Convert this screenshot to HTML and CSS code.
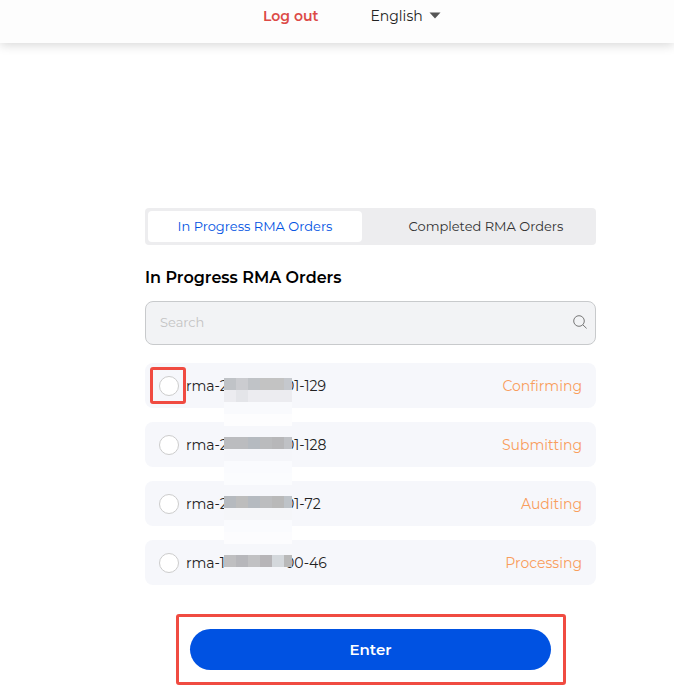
FILE: index.html
```html
<!DOCTYPE html>
<html lang="en">
<head>
    <meta charset="UTF-8">
    <meta name="viewport" content="width=device-width, initial-scale=1.0">
    <title>RMA Orders</title>
    <link rel="stylesheet" href="styles.css">
</head>
<body>
    <header class="header">
        <a href="#" class="logout">Log out</a>
        <div class="language">
            <select aria-label="Language">
                <option>English</option>
            </select>
            <svg class="caret" viewBox="0 0 12 7" aria-hidden="true"><path d="M0.5 0.5h11L6 6.5z" fill="#555"/></svg>
        </div>
    </header>

    <main class="content">
        <div class="tabs">
            <button type="button" class="tab active">In Progress RMA Orders</button>
            <button type="button" class="tab">Completed RMA Orders</button>
        </div>

        <h1>In Progress RMA Orders</h1>

        <div class="search">
            <input type="text" placeholder="Search" aria-label="Search">
            <svg class="search-icon" viewBox="0 0 14 14" fill="none" stroke="#777" aria-hidden="true">
                <circle cx="6" cy="6" r="5.3"/>
                <path d="M9.8 9.8l3.8 3.6"/>
            </svg>
        </div>

        <div class="orders">
            <label class="order">
                <span class="pick highlight"><input type="radio" name="order"></span>
                <span class="prefix">rma-2</span>
                <span class="mask">
                    <svg width="68" height="48" shape-rendering="crispEdges" aria-hidden="true">
                        <path fill="#c0c3c7" d="M0 0h12v12H0z"/><path fill="#cbccd0" d="M12 0h12v12H12z"/><path fill="#c0c3c7" d="M24 0h12v12H24z"/><path fill="#c3c3c3" d="M36 0h24v12H36z"/><path fill="#c5c8cd" d="M60 0h8v12h-8z"/>
                        <path fill="#ececf0" d="M0 12h68v12H0z"/><path fill="#e4e5e9" d="M12 12h12v12H12z"/>
                        <path fill="#f9fafd" d="M0 24h68v12H0z"/><path fill="#fdfdfe" d="M0 36h68v12H0z"/>
                    </svg>
                </span>
                <span class="suffix">01-129</span>
                <span class="status">Confirming</span>
            </label>
            <label class="order">
                <span class="pick"><input type="radio" name="order"></span>
                <span class="prefix">rma-2</span>
                <span class="mask">
                    <svg width="68" height="48" shape-rendering="crispEdges" aria-hidden="true">
                        <path fill="#bbbcbf" d="M0 0h24v12H0z"/><path fill="#b5bac0" d="M24 0h12v12H24z"/><path fill="#babbbd" d="M36 0h12v12H36z"/><path fill="#b7b7b9" d="M48 0h12v12H48z"/><path fill="#bfc1c5" d="M60 0h8v12h-8z"/>
                        <path fill="#f5f6fa" d="M0 12h68v12H0z"/>
                        <path fill="#fafbfe" d="M0 24h68v12H0z"/><path fill="#fbfcfe" d="M0 36h68v12H0z"/>
                    </svg>
                </span>
                <span class="suffix">01-128</span>
                <span class="status">Submitting</span>
            </label>
            <label class="order">
                <span class="pick"><input type="radio" name="order"></span>
                <span class="prefix">rma-2</span>
                <span class="mask">
                    <svg width="68" height="48" shape-rendering="crispEdges" aria-hidden="true">
                        <path fill="#b6babf" d="M0 0h12v12H0z"/><path fill="#bdbdbd" d="M12 0h12v12H12z"/><path fill="#b5bac0" d="M24 0h12v12H24z"/><path fill="#bcbdbf" d="M36 0h12v12H36z"/><path fill="#b9b9b9" d="M48 0h12v12H48z"/><path fill="#bec3c8" d="M60 0h8v12h-8z"/>
                        <path fill="#f5f6f9" d="M0 12h68v12H0z"/>
                        <path fill="#fafbfe" d="M0 24h68v12H0z"/><path fill="#fcfcfe" d="M0 36h68v12H0z"/>
                    </svg>
                </span>
                <span class="suffix">01-72</span>
                <span class="status">Auditing</span>
            </label>
            <label class="order">
                <span class="pick"><input type="radio" name="order"></span>
                <span class="prefix">rma-1</span>
                <span class="mask">
                    <svg width="68" height="12" shape-rendering="crispEdges" aria-hidden="true">
                        <path fill="#bfbfc1" d="M0 0h12v12H0z"/><path fill="#b7b7bb" d="M12 0h12v12H12z"/><path fill="#c1c1c3" d="M24 0h12v12H24z"/><path fill="#b7b5b8" d="M36 0h12v12H36z"/><path fill="#d4d8dc" d="M48 0h12v12H48z"/><path fill="#b9b9b9" d="M60 0h8v12h-8z"/>
                    </svg>
                </span>
                <span class="suffix">00-46</span>
                <span class="status">Processing</span>
            </label>
        </div>

        <div class="submit">
            <button type="button" class="enter">Enter</button>
        </div>
    </main>
</body>
</html>
```
FILE: styles.css
```css
:root {
    --primary-color: #0052e2;
    --mark-color: #f04b41;
    --row-color: #f6f7fb;
}

* {
    box-sizing: border-box;
}

body {
    margin: 0;
    background: #fff;
    color: #222;
    font-family: Montserrat, Inter, sans-serif;
    font-size: 14px;
}

button,
input,
select {
    font-family: inherit;
}

.header {
    display: flex;
    align-items: flex-start;
    gap: 52px;
    height: 43px;
    padding: 4px 0 0 263px;
    background: #fdfdfd;
    box-shadow: 0 2px 10px rgba(0, 0, 0, 0.16);
}

.logout {
    color: #dc4a46;
    font-weight: 600;
    font-size: 14px;
    line-height: 24px;
    text-decoration: none;
}

.language {
    display: flex;
    align-items: center;
    gap: 6px;
    height: 23px;
}

.language select {
    appearance: none;
    border: 0;
    padding: 0;
    background: none;
    color: #222;
    font-size: 14px;
}

.caret {
    width: 12px;
    height: 7px;
}

.content {
    padding: 165px 78px 14px 145px;
}

.tabs {
    display: grid;
    grid-template-columns: 1fr 1fr;
    gap: 17px;
    padding: 3px;
    border-radius: 4px;
    background: #ededef;
}

.tab {
    height: 31px;
    padding: 0 0 2px;
    border: 0;
    border-radius: 4px;
    background: none;
    color: #333;
    font-size: 13px;
}

.tab.active {
    background: #fff;
    color: var(--primary-color);
}

h1 {
    margin: 21px 0 11px;
    color: #000;
    font-size: 16px;
    font-weight: 600;
    line-height: 24px;
}

.search {
    position: relative;
}

.search input {
    display: block;
    width: 100%;
    height: 44px;
    padding: 0 40px 2px 14px;
    border: 1px solid #c8cacc;
    border-radius: 8px;
    background: #f2f3f5;
    font-size: 13px;
}

.search input::placeholder {
    color: #c4c4c4;
}

.search-icon {
    position: absolute;
    top: 14px;
    right: 9px;
    width: 14px;
    height: 14px;
}

.orders {
    display: flex;
    flex-direction: column;
    gap: 14px;
    margin-top: 18px;
}

.order {
    display: flex;
    align-items: center;
    height: 45px;
    padding: 0 14px 0 5px;
    border-radius: 8px;
    background: var(--row-color);
    font-size: 14px;
}

.pick {
    display: flex;
    align-items: center;
    justify-content: center;
    width: 36px;
    height: 37px;
    padding-left: 2px;
    border: 3px solid transparent;
    border-radius: 3px;
}

.pick.highlight {
    border-color: var(--mark-color);
}

.pick input {
    flex: none;
    appearance: none;
    width: 20px;
    height: 20px;
    margin: 0;
    border: 1px solid #ccc;
    border-radius: 50%;
    background: #fff;
}

.pick input:checked {
    border: 6px solid var(--primary-color);
}

.prefix {
    width: 38px;
    white-space: nowrap;
}

.mask {
    position: relative;
    width: 68px;
    height: 16px;
}

/* the blurred blocks run past the row, over the gap below it */
.mask svg {
    position: absolute;
    top: 0;
    left: 0;
    z-index: 1;
}

.suffix {
    margin-left: -7px;
}

.status {
    margin-left: auto;
    color: #f99d5c;
}

.submit {
    margin: 29px 30px 0 31px;
    padding: 12px 12px 12px 11px;
    border: 3px solid var(--mark-color);
    border-radius: 3px;
}

.enter {
    display: block;
    width: 100%;
    height: 41px;
    border: 0;
    border-radius: 21px;
    background: var(--primary-color);
    color: #fff;
    font-size: 15px;
    font-weight: 600;
}
```
